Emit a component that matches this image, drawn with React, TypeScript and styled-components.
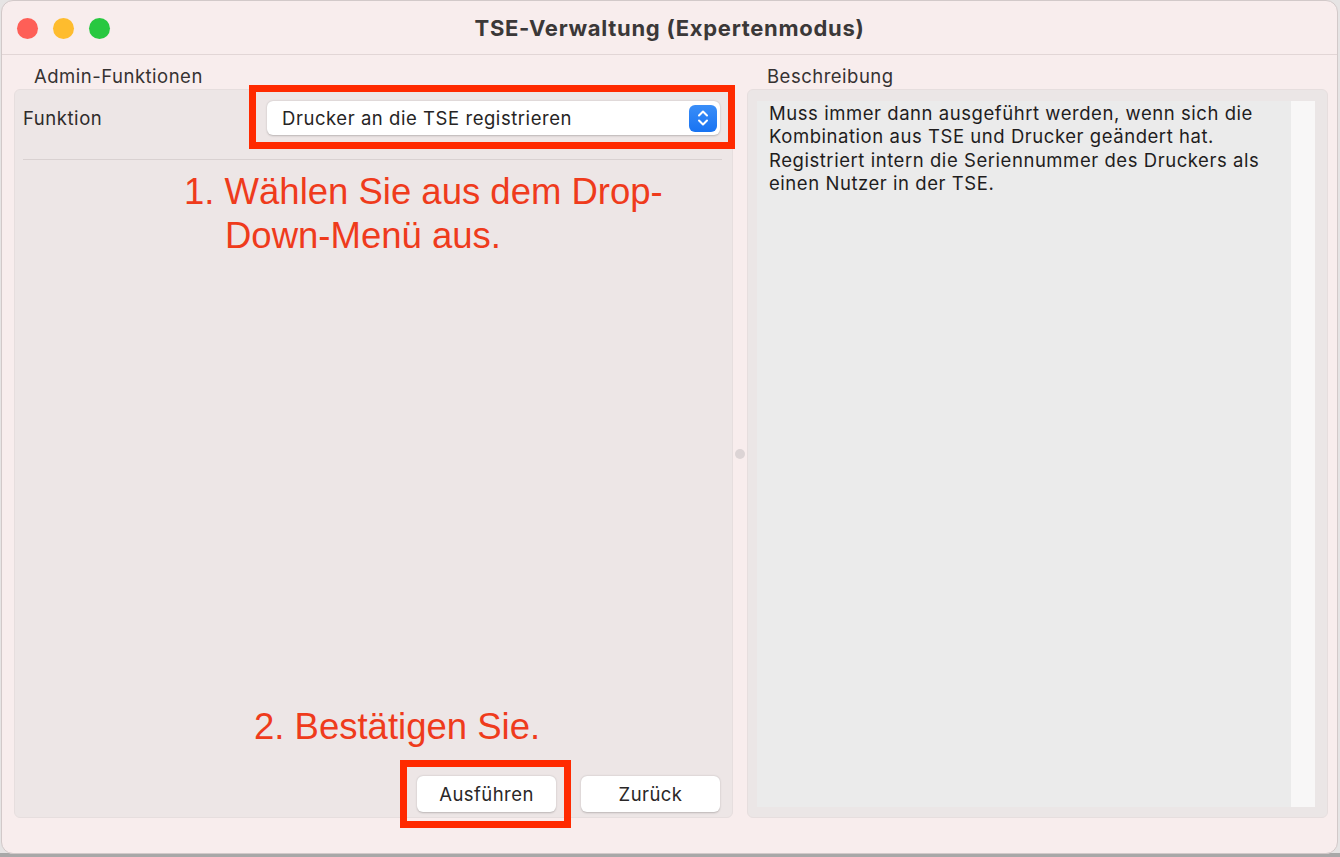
import styled, { createGlobalStyle } from "styled-components";

const GlobalStyle = createGlobalStyle`
  html, body {
    margin: 0;
    padding: 0;
  }
  body {
    width: 1340px;
    height: 857px;
    overflow: hidden;
    background: linear-gradient(to bottom, #e6e4e4 0, #e6e4e4 853px, #a8a8a8 853px);
    font-family: Inter, "Noto Sans", sans-serif;
  }
`;

const Window = styled.div`
  margin-left: 1px;
  width: 1337px;
  height: 854px;
  box-sizing: border-box;
  display: flex;
  flex-direction: column;
  background: #f8eded;
  border: 1px solid #d2c9c9;
  border-radius: 12px;
  overflow: hidden;
`;

const TitleBar = styled.div`
  position: relative;
  height: 53px;
  flex: none;
  display: flex;
  align-items: center;
  justify-content: center;
  border-bottom: 1px solid #e2d6d6;
`;

const Lights = styled.div`
  position: absolute;
  left: 15px;
  top: 17px;
  display: flex;
  gap: 15px;
`;

const Light = styled.span<{ $color: string }>`
  width: 21px;
  height: 21px;
  border-radius: 50%;
  background: ${(p) => p.$color};
`;

const Title = styled.h1`
  margin: 0;
  font-size: 22px;
  font-weight: 700;
  color: #3b3838;
  letter-spacing: 0.7px;
`;

const Body = styled.div`
  flex: 1;
  display: grid;
  grid-template-columns: 719px 14px 1fr;
  grid-template-rows: 25px 1fr;
  padding: 9px 9px 35px 12px;
`;

const GroupLabel = styled.div<{ $col: number; $indent: number }>`
  grid-column: ${(p) => p.$col};
  grid-row: 1;
  padding-left: ${(p) => p.$indent}px;
  line-height: 24px;
  font-size: 18.5px;
  letter-spacing: 0.5px;
  color: #363232;
`;

const Panel = styled.div`
  grid-row: 2;
  display: flex;
  flex-direction: column;
  box-sizing: border-box;
  background: #ede6e6;
  border: 1px solid #e6dede;
  border-radius: 6px;
`;

const LeftPanel = styled(Panel)`
  grid-column: 1;
  padding: 11px 12px 5px 8px;
`;

const RightPanel = styled(Panel)`
  grid-column: 3;
  flex-direction: row;
  background: #ebe6e6;
  padding: 11px 12px 10px 9px;
`;

const Splitter = styled.div`
  grid-column: 2;
  grid-row: 2;
  display: flex;
  align-items: center;
  justify-content: center;
`;

const Knob = styled.span`
  width: 10px;
  height: 10px;
  border-radius: 50%;
  background: #dcd4d5;
`;

const FieldRow = styled.div`
  display: flex;
  align-items: center;
  justify-content: space-between;
  height: 34px;
`;

const FieldLabel = styled.span`
  font-size: 18.5px;
  letter-spacing: 0.55px;
  color: #2e2b2b;
`;

const Select = styled.div`
  position: relative;
  width: 453px;
  height: 34px;
  box-sizing: border-box;
  display: flex;
  align-items: center;
  justify-content: space-between;
  padding: 0 3px 0 15px;
  background: #ffffff;
  border-radius: 6px;
  box-shadow: 0 0.5px 2px rgba(0, 0, 0, 0.22);
  font-size: 18.5px;
  letter-spacing: 0.55px;
  color: #262424;
`;

const Stepper = styled.span`
  width: 28px;
  height: 27px;
  border-radius: 6px;
  background: linear-gradient(to bottom, #3a8ef8, #1873f2);
  display: flex;
  align-items: center;
  justify-content: center;
`;

const Highlight = styled.span<{ $inset: string }>`
  position: absolute;
  inset: ${(p) => p.$inset};
  border: 7px solid #ff2a00;
  pointer-events: none;
`;

const Divider = styled.div`
  height: 1px;
  margin: 24px -2px 0 0;
  background: #d9d1d1;
`;

const Step = styled.p<{ $indent: number }>`
  margin: 0;
  padding-left: ${(p) => p.$indent}px;
  text-indent: -41px;
  font-family: "Liberation Sans", Arial, sans-serif;
  font-size: 36.5px;
  line-height: 39px;
  color: #ef3b1c;
`;

const FirstStep = styled(Step)`
  margin-top: 10px;
  line-height: 44px;
`;

const Spacer = styled.div`
  flex: 1;
`;

const ButtonRow = styled.div`
  display: flex;
  justify-content: flex-end;
  gap: 25px;
  margin-top: 30px;
`;

const ButtonWrap = styled.div`
  position: relative;
  display: flex;
`;

const Button = styled.button`
  width: 139px;
  height: 36px;
  border: none;
  border-radius: 6px;
  background: #ffffff;
  box-shadow: 0 0.5px 2px rgba(0, 0, 0, 0.22);
  font-family: Inter, "Noto Sans", sans-serif;
  font-size: 18.5px;
  letter-spacing: 0.45px;
  color: #2a2727;
`;

const TextArea = styled.div`
  flex: 1;
  display: flex;
  background: #ebebeb;
`;

const DescText = styled.p`
  flex: 1;
  margin: 0;
  padding: 1px 12px;
  font-size: 18.5px;
  letter-spacing: 0.55px;
  line-height: 23.3px;
  color: #1f1d1d;
`;

const ScrollTrack = styled.div`
  width: 24px;
  background: #f8f7f7;
`;

const Chevrons = () => (
  <svg width="14" height="20" viewBox="0 0 14 20" fill="none">
    <path
      d="M3 7.5 L7 3.5 L11 7.5 M3 12.5 L7 16.5 L11 12.5"
      stroke="#ffffff"
      strokeWidth="2"
      strokeLinecap="round"
      strokeLinejoin="round"
    />
  </svg>
);

export default function App() {
  return (
    <>
      <GlobalStyle />
      <Window>
        <TitleBar>
          <Lights>
            <Light $color="#fe5f57" />
            <Light $color="#febc2e" />
            <Light $color="#28c840" />
          </Lights>
          <Title>TSE-Verwaltung (Expertenmodus)</Title>
        </TitleBar>
        <Body>
          <GroupLabel $col={1} $indent={20}>
            Admin-Funktionen
          </GroupLabel>
          <GroupLabel $col={3} $indent={20}>
            Beschreibung
          </GroupLabel>

          <LeftPanel>
            <FieldRow>
              <FieldLabel>Funktion</FieldLabel>
              <Select>
                <span>Drucker an die TSE registrieren</span>
                <Stepper>
                  <Chevrons />
                </Stepper>
                <Highlight $inset="-16px -15px -14px -18px" />
              </Select>
            </FieldRow>
            <Divider />
            <FirstStep $indent={202}>
              1. Wählen Sie aus dem Drop-
              <br />
              Down-Menü aus.
            </FirstStep>
            <Spacer />
            <Step $indent={272}>2. Bestätigen Sie.</Step>
            <ButtonRow>
              <ButtonWrap>
                <Button>Ausführen</Button>
                <Highlight $inset="-16px -15px -16px -17px" />
              </ButtonWrap>
              <Button>Zurück</Button>
            </ButtonRow>
          </LeftPanel>

          <Splitter>
            <Knob />
          </Splitter>

          <RightPanel>
            <TextArea>
              <DescText>
                Muss immer dann ausgeführt werden, wenn sich die
                <br />
                Kombination aus TSE und Drucker geändert hat.
                <br />
                Registriert intern die Seriennummer des Druckers als
                <br />
                einen Nutzer in der TSE.
              </DescText>
              <ScrollTrack />
            </TextArea>
          </RightPanel>
        </Body>
      </Window>
    </>
  );
}
